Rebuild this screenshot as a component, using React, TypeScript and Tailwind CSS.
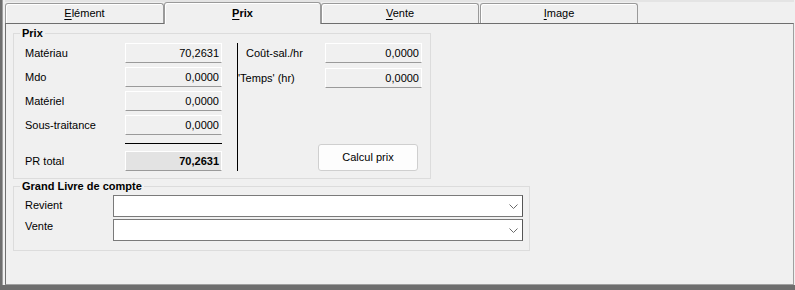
import { ReactNode } from 'react'

function Tab({ first, rest, selected, className = '' }: { first: string; rest: string; selected?: boolean; className?: string }) {
  return (
    <div
      className={
        'flex items-center justify-center rounded-t-[3px] border border-b-0 border-[#9a9a9a] shadow-[inset_1px_1px_0_#ffffff] ' +
        (selected ? 'relative z-10 -mb-px h-[22px] bg-[#f0f0f0] font-bold' : 'h-[20px] bg-[#f0f0f0]') +
        ' ' +
        className
      }
    >
      <span className="leading-[13px]">
        <span className="underline underline-offset-2">{first}</span>
        {rest}
      </span>
    </div>
  )
}

function Field({ value, total }: { value: string; total?: boolean }) {
  return (
    <div
      className={
        'flex h-[20px] w-[97px] items-center justify-end border border-white border-b-[#9a9a9a] pr-[2px] ' +
        (total ? 'bg-[#e3e3e3] font-bold' : 'bg-[#f0f0f0]')
      }
    >
      {value}
    </div>
  )
}

function Row({ label, children }: { label: string; children: ReactNode }) {
  return (
    <div className="flex h-[20px] items-center">
      <span className="w-[100px]">{label}</span>
      {children}
    </div>
  )
}

function Combo() {
  return (
    <div className="flex h-[22px] w-[410px] items-center justify-end border border-[#7a7a7a] border-r-[#555] bg-white pr-[4px]">
      <svg width="9" height="5" viewBox="0 0 9 5">
        <polyline points="0.5,0.5 4.5,4.5 8.5,0.5" fill="none" stroke="#6a6a6a" strokeWidth="1" />
      </svg>
    </div>
  )
}

export default function App() {
  return (
    <div className="h-[290px] w-[795px] bg-[#6e6e6e] pb-[5px] pl-[2px] font-['Liberation_Sans',Arial,sans-serif] text-[11px] leading-[13px] text-black">
      <div className="flex h-full flex-col border-l border-[#a0a0a0] bg-[#f0f0f0] pl-[2px] pr-[1px]">
        {/* tabs */}
        <div className="flex h-[23px] items-end border-t-2 border-[#e4e4e4]">
          <Tab first="E" rest="lément" className="w-[159px]" />
          <Tab first="P" rest="rix" selected className="w-[157px]" />
          <Tab first="V" rest="ente" className="w-[158px]" />
          <Tab first="I" rest="mage" className="ml-[1px] w-[158px]" />
        </div>

        {/* panel */}
        <div className="flex-1 border border-[#6e6e6e] border-b-[#a0a0a0] border-r-[#a0a0a0] pl-[7px] pt-[3px]">
          <fieldset className="h-[152px] w-[418px] border border-[#dcdcdc] pt-[3px]">
            <legend className="ml-[6px] px-[2px] font-bold">Prix</legend>
            <div className="flex">
              <div className="flex flex-col pl-[11px]">
                <div className="flex flex-col gap-[4px]">
                  <Row label="Matériau">
                    <Field value="70,2631" />
                  </Row>
                  <Row label="Mdo">
                    <Field value="0,0000" />
                  </Row>
                  <Row label="Matériel">
                    <Field value="0,0000" />
                  </Row>
                  <Row label="Sous-traitance">
                    <Field value="0,0000" />
                  </Row>
                </div>
                <div className="ml-[100px] mt-[8px] h-px w-[97px] bg-black" />
                <div className="mt-[7px]">
                  <Row label="PR total">
                    <Field value="70,2631" total />
                  </Row>
                </div>
              </div>

              <div className="ml-[15px] h-[128px] w-px bg-black" />

              <div className="flex h-[128px] flex-col">
                <div className="flex h-[20px] items-center">
                  <span className="w-[87px] pl-[8px]">Coût-sal./hr</span>
                  <Field value="0,0000" />
                </div>
                <div className="mt-[5px] flex h-[20px] items-center">
                  <span className="w-[87px]">'Temps' (hr)</span>
                  <Field value="0,0000" />
                </div>
                <button className="ml-[80px] mt-auto h-[27px] w-[100px] rounded-[3px] border border-[#cfcfcf] bg-[#fdfdfd]">
                  Calcul prix
                </button>
              </div>
            </div>
          </fieldset>

          <fieldset className="mt-[1px] h-[71px] w-[517px] border border-[#dcdcdc] pt-[2px]">
            <legend className="ml-[6px] px-[2px] font-bold">Grand Livre de compte</legend>
            <div className="flex h-[22px]">
              <span className="w-[99px] pl-[11px] pt-[4px]">Revient</span>
              <Combo />
            </div>
            <div className="mt-[2px] flex h-[22px]">
              <span className="w-[99px] pl-[11px] pt-[1px]">Vente</span>
              <Combo />
            </div>
          </fieldset>
        </div>
      </div>
    </div>
  )
}
